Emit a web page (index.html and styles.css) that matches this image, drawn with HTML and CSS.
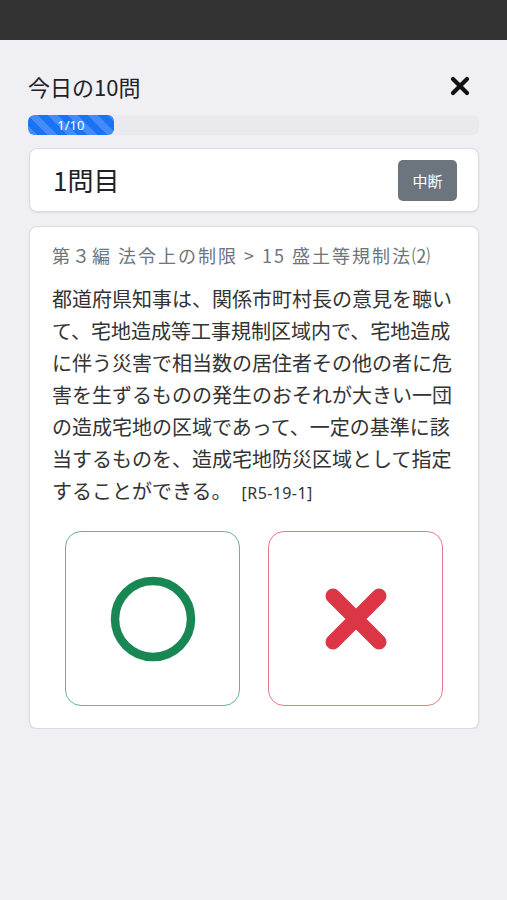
FILE: index.html
```html
<!DOCTYPE html>
<html lang="ja">
<head>
<meta charset="utf-8">
<link rel="stylesheet" href="styles.css">
</head>
<body>
<div class="topbar"></div>
<main class="page">
  <div class="title-row">
    <h1 class="title">今日の10問</h1>
    <button class="close" aria-label="閉じる">
      <svg width="20" height="20" viewBox="0 0 20 20"><path d="M3 3 L17 17 M17 3 L3 17" stroke="#111" stroke-width="4.2" stroke-linecap="round"/></svg>
    </button>
  </div>
  <div class="progress">
    <div class="progress-bar" style="width:19%">1/10</div>
  </div>
  <div class="card head-card">
    <div class="qnum">1問目</div>
    <button class="btn-stop">中断</button>
  </div>
  <div class="card q-card">
    <div class="crumb">第３編 法令上の制限 &gt; 15 盛土等規制法⑵</div>
    <p class="question">都道府県知事は、関係市町村長の意見を聴いて、宅地造成等工事規制区域内で、宅地造成に伴う災害で相当数の居住者その他の者に危害を生ずるものの発生のおそれが大きい一団の造成宅地の区域であって、一定の基準に該当するものを、造成宅地防災区域として指定することができる。<span class="ref">[R5-19-1]</span></p>
    <div class="answers">
      <button class="ans ans-o" aria-label="正しい">
        <svg width="90" height="90" viewBox="0 0 90 90"><circle cx="45" cy="45" r="38" fill="none" stroke="#198754" stroke-width="8.5"/></svg>
      </button>
      <button class="ans ans-x" aria-label="誤り">
        <svg width="70" height="70" viewBox="0 0 70 70"><path d="M12 12 L58 58 M58 12 L12 58" stroke="#dc3545" stroke-width="15" stroke-linecap="round"/></svg>
      </button>
    </div>
  </div>
</main>
</body>
</html>
```

FILE: styles.css
```css
* { box-sizing: border-box; }
html, body {
  margin: 0;
  padding: 0;
  background: #efeff4;
  font-family: "Noto Sans CJK JP", "Noto Sans", sans-serif;
  color: #212529;
}
.topbar {
  height: 40px;
  background: #333333;
}
.page {
  padding: 31px 28px 0 28px;
}
.title-row {
  display: flex;
  align-items: center;
  justify-content: space-between;
  height: 30px;
  margin-bottom: 2px;
}
.title {
  margin: 0;
  font-size: 22px;
  font-weight: 400;
  line-height: 30px;
  color: #222;
}
.close {
  border: 0;
  background: none;
  padding: 0;
  margin-right: 9px;
  display: flex;
}
.progress {
  margin-top: 14px;
  height: 20px;
  background: #e9e9ee;
  border-radius: 6px;
  overflow: hidden;
}
.progress-bar {
  height: 100%;
  background-color: #1a73f5;
  background-image: linear-gradient(45deg, rgba(255,255,255,.18) 25%, transparent 25%, transparent 50%, rgba(255,255,255,.18) 50%, rgba(255,255,255,.18) 75%, transparent 75%, transparent);
  background-size: 20px 20px;
  border-radius: 6px;
  color: #fff;
  font-family: "Noto Sans", sans-serif;
  font-size: 13px;
  line-height: 20px;
  text-align: center;
}
.card {
  background: #fff;
  border: 1px solid #dcdce0;
  border-radius: 8px;
  box-shadow: 0 1px 2px rgba(0,0,0,.08);
  margin-left: 1px;
}
.head-card {
  margin-top: 13px;
  height: 64px;
  display: flex;
  align-items: center;
  justify-content: space-between;
  padding: 0 21px 0 23px;
}
.qnum {
  font-size: 26px;
  line-height: 30px;
  color: #222;
}
.btn-stop {
  width: 59px;
  height: 41px;
  border: 0;
  border-radius: 5px;
  background: #6c757d;
  color: #fff;
  font-family: "Noto Sans CJK JP", sans-serif;
  font-size: 15px;
  padding: 0;
}
.q-card {
  margin-top: 14px;
  padding: 16px 22px 22px 22px;
}
.crumb {
  font-size: 18px;
  line-height: 24px;
  letter-spacing: 2px;
  color: #6c757d;
}
.question {
  margin: 16px 0 0 0;
  font-size: 20px;
  line-height: 32px;
  color: #333;
}
.ref {
  display: inline-block;
  margin-left: 10px;
  font-family: "Noto Sans", sans-serif;
  font-size: 16px;
  line-height: 20px;
  letter-spacing: 0.4px;
}
.answers {
  margin-top: 24px;
  display: flex;
  justify-content: center;
  gap: 28px;
}
.ans {
  width: 175px;
  height: 175px;
  background: #fff;
  border-radius: 16px;
  display: flex;
  align-items: center;
  justify-content: center;
  padding: 0;
}
.ans-o { border: 1.5px solid #6cb392; }
.ans-x { border: 1.5px solid #e37c86; }
```
